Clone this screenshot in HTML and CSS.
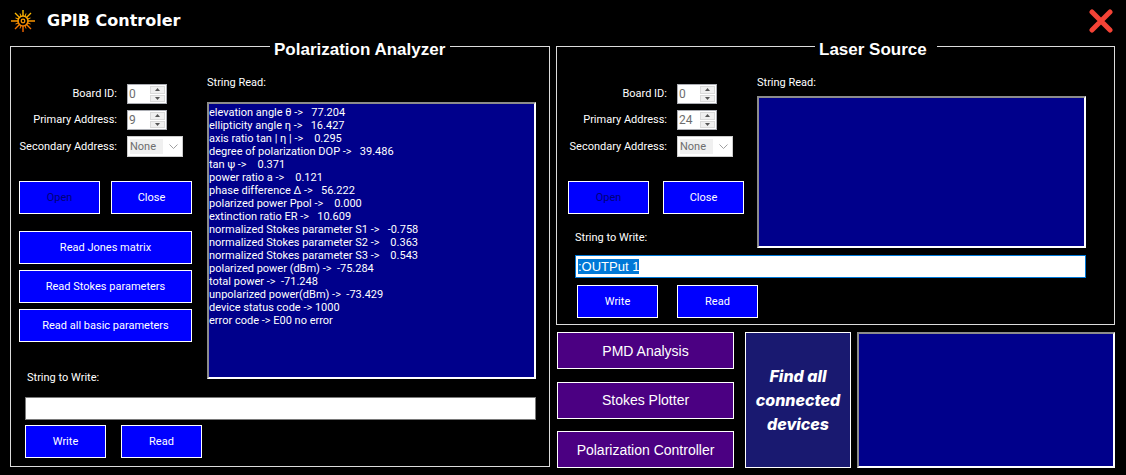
FILE: index.html
```html
<!DOCTYPE html>
<html lang="en">
<head>
<meta charset="utf-8">
<title>GPIB Controler</title>
<link rel="stylesheet" href="styles.css">
</head>
<body>
<header class="titlebar">
  <svg class="logo" viewBox="0 0 24 24" fill="none" stroke="url(#sun)" aria-hidden="true">
    <defs><linearGradient id="sun" gradientUnits="userSpaceOnUse" x1="0" y1="0" x2="0" y2="24"><stop offset="0" stop-color="#ffd000"/><stop offset="1" stop-color="#f25a00"/></linearGradient></defs>
    <circle cx="12" cy="12" r="5" stroke-width="1.6"/>
    <circle cx="12" cy="12" r="1.8" stroke-width="1.3"/>
    <path stroke-width="1.4" d="M12 1v6M12 17v6M0 12h7M17 12h7M4 4l4.500 4.500M15.500 15.500L20 20M20 4l-4.500 4.500M8.500 15.500L4 20"/>
    <path stroke-width="1" d="M9 4.500l1 3M15 4.500l-1 3M9 19.500l1-3M15 19.500l-1-3M4.500 9l3 1M4.500 15l3-1M19.500 9l-3 1M19.500 15l-3-1"/>
  </svg>
  <h1 class="title">GPIB Controler</h1>
  <button class="close" type="button" aria-label="Close window">
    <svg viewBox="0 0 24 24" stroke="#f44336" stroke-width="5" stroke-linecap="round"><path d="M3 3l18 18M21 3L3 21"/></svg>
  </button>
</header>
<main class="workspace">
  <fieldset class="panel analyzer">
    <legend class="panel-title">Polarization Analyzer</legend>
    <div class="panel-top">
      <div class="controls">
        <div class="fields">
          <label for="a-board">Board ID:</label>
          <span class="spin"><input id="a-board" type="number" value="0" disabled><span class="steps"><button type="button" disabled aria-label="Up"><svg viewBox="0 0 5 3"><path d="M0 3L2.500 0L5 3z"/></svg></button><button type="button" disabled aria-label="Down"><svg viewBox="0 0 5 3"><path d="M0 0L2.500 3L5 0z"/></svg></button></span></span>
          <label for="a-primary">Primary Address:</label>
          <span class="spin"><input id="a-primary" type="number" value="9" disabled><span class="steps"><button type="button" disabled aria-label="Up"><svg viewBox="0 0 5 3"><path d="M0 3L2.500 0L5 3z"/></svg></button><button type="button" disabled aria-label="Down"><svg viewBox="0 0 5 3"><path d="M0 0L2.500 3L5 0z"/></svg></button></span></span>
          <label for="a-secondary">Secondary Address:</label>
          <span class="drop"><select id="a-secondary" disabled><option>None</option></select><svg viewBox="0 0 9 5"><path d="M.5.5l4 4l4-4"/></svg></span>
        </div>
        <div class="pair">
          <button class="btn" type="button" disabled>Open</button>
          <button class="btn" type="button">Close</button>
        </div>
        <div class="stack">
          <button class="btn" type="button">Read Jones matrix</button>
          <button class="btn" type="button">Read Stokes parameters</button>
          <button class="btn" type="button">Read all basic parameters</button>
        </div>
      </div>
      <div class="reader">
        <label for="a-read">String Read:</label>
        <textarea class="well" id="a-read" readonly>elevation angle θ ->   77.204
ellipticity angle η ->   16.427
axis ratio tan | η | ->    0.295
degree of polarization DOP ->   39.486
tan ψ ->    0.371
power ratio a ->    0.121
phase difference Δ ->   56.222
polarized power Ppol ->    0.000
extinction ratio ER ->   10.609
normalized Stokes parameter S1 ->   -0.758
normalized Stokes parameter S2 ->    0.363
normalized Stokes parameter S3 ->    0.543
polarized power (dBm) ->  -75.284
total power ->  -71.248
unpolarized power(dBm) ->  -73.429
device status code -> 1000
error code -> E00 no error</textarea>
      </div>
    </div>
    <div class="writer">
      <label class="write-label" for="a-write">String to Write:</label>
      <input class="line" id="a-write" type="text">
      <div class="actions">
        <button class="btn" type="button">Write</button>
        <button class="btn" type="button">Read</button>
      </div>
    </div>
  </fieldset>

  <fieldset class="panel laser">
    <legend class="panel-title">Laser Source</legend>
    <div class="panel-top">
      <div class="controls">
        <div class="fields">
          <label for="l-board">Board ID:</label>
          <span class="spin"><input id="l-board" type="number" value="0" disabled><span class="steps"><button type="button" disabled aria-label="Up"><svg viewBox="0 0 5 3"><path d="M0 3L2.500 0L5 3z"/></svg></button><button type="button" disabled aria-label="Down"><svg viewBox="0 0 5 3"><path d="M0 0L2.500 3L5 0z"/></svg></button></span></span>
          <label for="l-primary">Primary Address:</label>
          <span class="spin"><input id="l-primary" type="number" value="24" disabled><span class="steps"><button type="button" disabled aria-label="Up"><svg viewBox="0 0 5 3"><path d="M0 3L2.500 0L5 3z"/></svg></button><button type="button" disabled aria-label="Down"><svg viewBox="0 0 5 3"><path d="M0 0L2.500 3L5 0z"/></svg></button></span></span>
          <label for="l-secondary">Secondary Address:</label>
          <span class="drop"><select id="l-secondary" disabled><option>None</option></select><svg viewBox="0 0 9 5"><path d="M.5.5l4 4l4-4"/></svg></span>
        </div>
        <div class="pair">
          <button class="btn" type="button" disabled>Open</button>
          <button class="btn" type="button">Close</button>
        </div>
        <label class="write-label" for="l-write">String to Write:</label>
      </div>
      <div class="reader">
        <label for="l-read">String Read:</label>
        <textarea class="well" id="l-read" readonly></textarea>
      </div>
    </div>
    <div class="writer">
      <input class="line active" id="l-write" type="text" value=":OUTPut 1">
      <div class="actions">
        <button class="btn" type="button">Write</button>
        <button class="btn" type="button">Read</button>
      </div>
    </div>
  </fieldset>

  <section class="tools">
    <div class="tool-list">
      <button class="tool" type="button">PMD Analysis</button>
      <button class="tool" type="button">Stokes Plotter</button>
      <button class="tool" type="button">Polarization Controller</button>
    </div>
    <button class="find" type="button">Find all connected devices</button>
    <textarea class="well" readonly aria-label="Connected devices"></textarea>
  </section>
</main>
<script src="app.js"></script>
</body>
</html>
```
FILE: app.js
```js
const command = document.getElementById('l-write');
command.focus();
command.select();
```
FILE: styles.css
```css
* { box-sizing: border-box; }
body {
  margin: 0;
  min-height: 100vh;
  display: flex;
  flex-direction: column;
  background: #000;
  color: #fff;
  font: 11px/14px Roboto, sans-serif;
}
button, input, select, textarea { font: inherit; margin: 0; border-radius: 0; }
.titlebar { display: flex; align-items: center; height: 32px; margin-top: 4px; padding: 2px 13px 0 10px; flex: none; }
.logo { width: 26px; height: 24px; }
.title { margin: 0 auto 0 11px; font: 700 16px/20px "DejaVu Sans", sans-serif; }
.close { width: 24px; height: 24px; padding: 0; border: 0; background: none; }
.close svg { display: block; }

.workspace {
  flex: 1;
  display: grid;
  grid-template-columns: 540fr 559fr;
  grid-template-rows: auto 1fr;
  column-gap: 6px;
  padding: 0 11px 7px 10px;
  margin-top: -4px;
}
.panel { margin: 0; padding: 0; border: 1px solid #dcdcdc; min-width: 0; }
.analyzer { grid-row: span 2; margin-bottom: 1px; }
.panel-title { margin-left: 259px; padding: 8px 5px 0 4px; font: 700 17px/20px "Liberation Sans", sans-serif; }
.panel-top { display: flex; gap: 15px; padding: 16px 13px 0 8px; }
.controls { display: flex; flex-direction: column; width: 173px; flex: none; }
.fields { display: grid; grid-template-columns: 98px auto; column-gap: 10px; row-gap: 6px; padding-top: 8px; align-items: center; justify-items: start; }
.fields label { justify-self: end; white-space: nowrap; }
.spin { display: flex; width: 40px; height: 20px; border: 1px solid #abadb3; background: #fff; padding: 1px; }
.spin input { flex: 1; min-width: 0; padding: 0; border: 0; background: #fff; color: #6d6d6d; font-size: 12px; appearance: textfield; }
.spin input::-webkit-inner-spin-button { display: none; }
.steps { display: flex; flex-direction: column; width: 15px; flex: none; gap: 1px; }
.steps button { flex: 1; display: flex; align-items: center; justify-content: center; padding: 0; min-height: 0; border: 1px solid #dadada; background: #f0f0f0; }
.steps svg { width: 5px; height: 3px; fill: #555; }
.drop { position: relative; width: 56px; height: 21px; }
.drop select { appearance: none; display: block; width: 100%; height: 100%; padding: 0 0 0 2px; border: 1px solid #ccc; color: #6d6d6d; opacity: 1; background: linear-gradient(#f0f0f0, #f0f0f0) 2px 2px / 33px 15px no-repeat #fff; }
.drop svg { position: absolute; right: 5px; top: 8px; width: 9px; height: 5px; fill: none; stroke: #a0a0a0; }
.btn { height: 33px; padding: 0; border: 1px solid #fff; background: #00f; color: #fff; }
.btn:disabled { color: #00007a; }
.pair { display: grid; grid-template-columns: 81px 81px; gap: 11px; margin-top: 24px; }
.stack { display: grid; gap: 6px; margin-top: 17px; }
.reader { flex: 1; min-width: 0; display: flex; flex-direction: column; }
.well {
  display: block;
  width: 100%;
  min-width: 0;
  padding: 2px 0;
  border: 2px solid;
  border-color: #8c8c8c #fff #fff #8c8c8c;
  background: #00008b;
  color: #fff;
  line-height: 13px;
  resize: none;
  outline: 0;
}
.reader .well { margin-top: 12px; height: 277px; }
.writer { padding: 0 13px 8px 14px; }
.write-label { display: block; padding-left: 2px; }
.line { display: block; width: 100%; height: 23px; padding: 0 2px; border: 1px solid #7a7a7a; background: #fff; color: #000; font: 13px/17px "Liberation Sans", sans-serif; outline: 0; }
.line:focus, .line.active { border-color: #0078d7; }
.line::selection { background: #0078d7; color: #fff; }
.actions { display: flex; gap: 15px; margin-top: 5px; }
.actions .btn { width: 81px; }
.analyzer .write-label { margin: -8px 0 12px; }

.laser .panel-title { margin-left: 258px; padding-right: 10px; }
.laser .panel-top { gap: 13px; padding: 16px 28px 0 11px; }
.laser .controls { width: 176px; }
.laser .fields { grid-template-columns: 99px auto; }
.laser .pair { gap: 14px; }
.laser .write-label { margin-top: 17px; padding-left: 7px; }
.laser .reader .well { margin-top: 6px; height: 152px; }
.laser .writer { padding: 7px 28px 6px 18px; }
.laser .actions { gap: 19px; margin-top: 7px; padding-left: 2px; }

.tools { display: grid; grid-template-columns: 177px 106px 1fr; margin-top: 7px; padding-left: 1px; }
.tool-list { display: flex; flex-direction: column; justify-content: space-between; }
.tool { height: 37px; padding: 0; border: 1px solid #fff; background: #4b0082; color: #fff; font: 14px/18px "Liberation Sans", sans-serif; }
.find { margin-left: 11px; margin-right: -11px; padding: 0 6px; border: 1px solid #fff; background: #191970; color: #fff; font: italic 800 16px/24px Inter, sans-serif; }
.tools .well { margin-left: 17px; width: auto; }
```
